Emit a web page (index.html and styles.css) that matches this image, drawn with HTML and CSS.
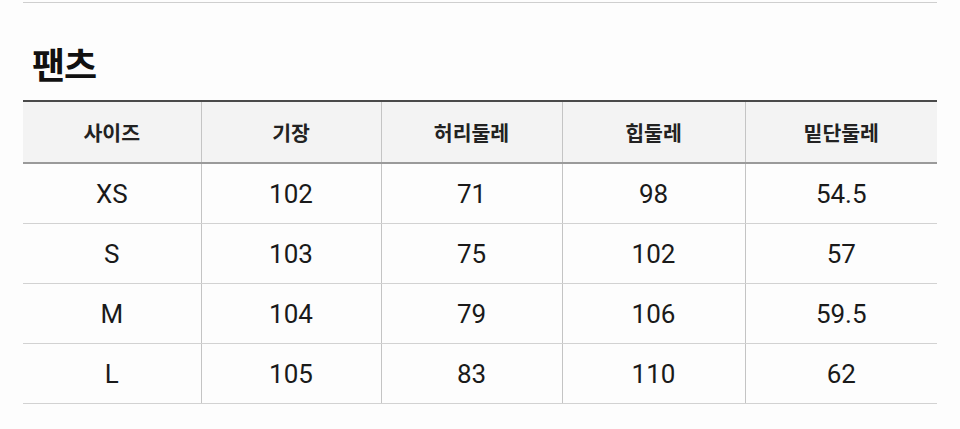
FILE: index.html
```html
<!DOCTYPE html>
<html lang="ko">
<head>
<meta charset="utf-8">
<link rel="stylesheet" href="styles.css">
</head>
<body>
<div class="page">
  <div class="topline"></div>
  <h2 class="title">팬츠</h2>
  <table class="size">
    <colgroup>
      <col class="c1"><col class="c2"><col class="c3"><col class="c4"><col class="c5">
    </colgroup>
    <thead>
      <tr><th>사이즈</th><th>기장</th><th>허리둘레</th><th>힙둘레</th><th>밑단둘레</th></tr>
    </thead>
    <tbody>
      <tr><td>XS</td><td>102</td><td>71</td><td>98</td><td>54.5</td></tr>
      <tr><td>S</td><td>103</td><td>75</td><td>102</td><td>57</td></tr>
      <tr><td>M</td><td>104</td><td>79</td><td>106</td><td>59.5</td></tr>
      <tr><td>L</td><td>105</td><td>83</td><td>110</td><td>62</td></tr>
    </tbody>
  </table>
</div>
</body>
</html>
```
FILE: styles.css
```css
html, body {
  margin: 0;
  padding: 0;
  background: #fdfdfd;
}
.page {
  width: 914px;
  margin-left: 23px;
  padding-top: 2px;
  font-family: Roboto, "Noto Sans CJK KR", sans-serif;
  color: #1a1a1a;
}
.topline {
  height: 1px;
  background: #cfcfcf;
}
.title {
  margin: 0;
  padding: 40px 0 17px 9px;
  font-family: "Noto Sans CJK KR", sans-serif;
  font-weight: 700;
  font-size: 36px;
  line-height: 40px;
  color: #111;
  letter-spacing: -1px;
}
.size {
  width: 914px;
  border-collapse: collapse;
  table-layout: fixed;
  border-top: 2px solid #4a4a4a;
}
.c1 { width: 178px; }
.c2 { width: 180px; }
.c3 { width: 181px; }
.c4 { width: 183px; }
.c5 { width: 192px; }
.size th {
  height: 60px;
  padding: 0;
  background: #f3f3f3;
  font-family: "Noto Sans CJK KR", sans-serif;
  font-weight: 700;
  font-size: 20.5px;
  color: #222;
  border-bottom: 2px solid #9a9a9a;
  border-left: 1px solid #c4c4c4;
}
.size td {
  height: 59px;
  padding: 0;
  text-align: center;
  font-size: 26px;
  color: #1a1a1a;
  border-bottom: 1px solid #d2d2d2;
  border-left: 1px solid #c4c4c4;
}
.size th:first-child, .size td:first-child {
  border-left: none;
}
```
